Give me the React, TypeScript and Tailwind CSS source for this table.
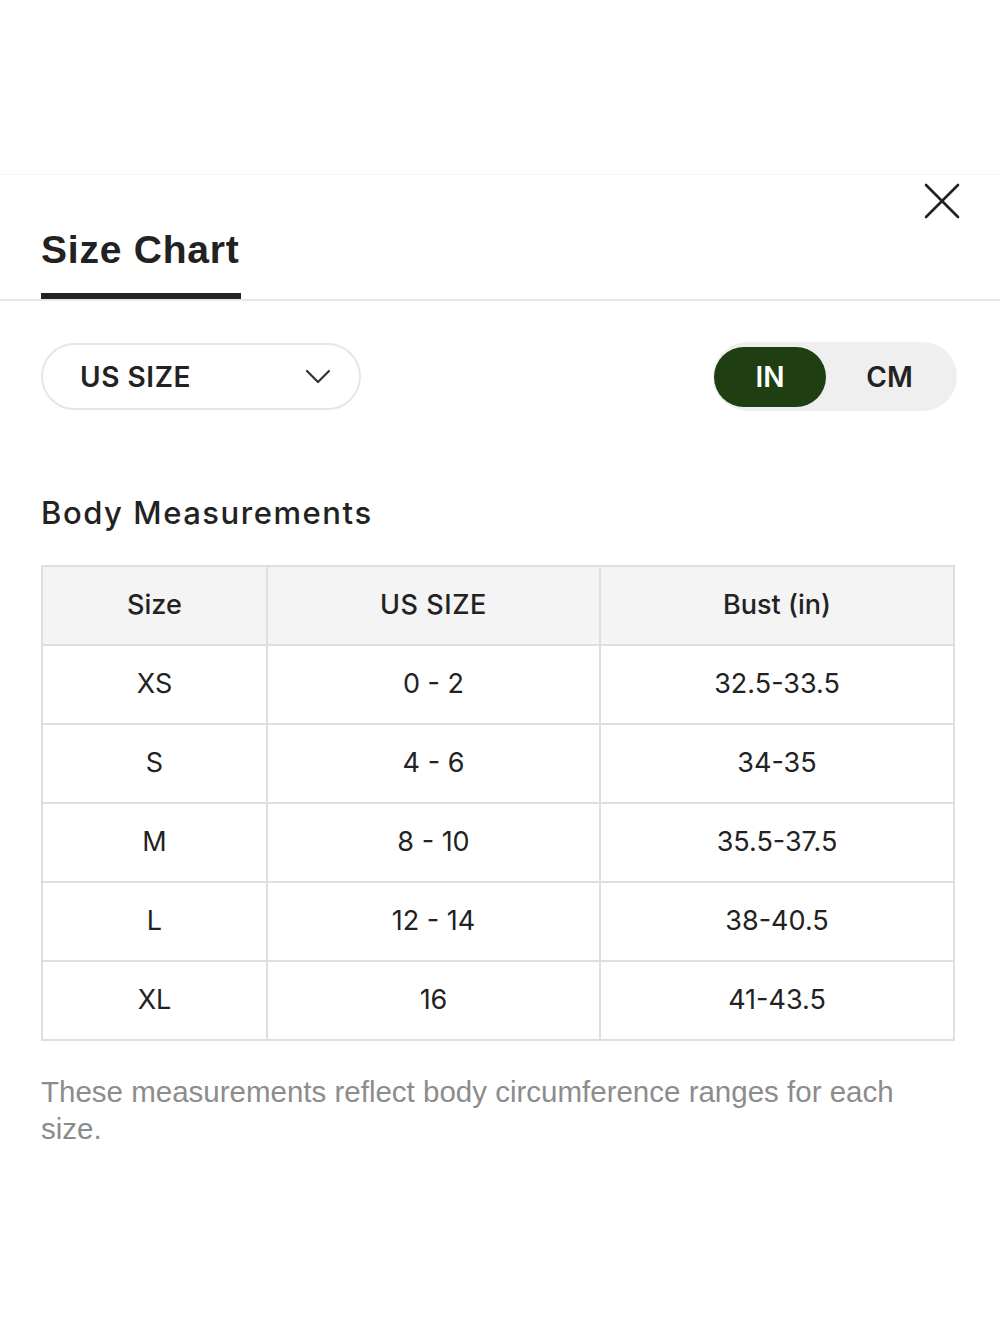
import { useState } from 'react'

const rows = [
  { size: 'XS', us: '0 - 2', bust: '32.5-33.5' },
  { size: 'S', us: '4 - 6', bust: '34-35' },
  { size: 'M', us: '8 - 10', bust: '35.5-37.5' },
  { size: 'L', us: '12 - 14', bust: '38-40.5' },
  { size: 'XL', us: '16', bust: '41-43.5' },
]

const sans = "font-['Inter',_'Noto_Sans',_sans-serif]"
const cell = 'h-[79px] flex items-center justify-center border-r-2 border-b-2 border-[#dfdfdf]'

export default function App() {
  const [unit, setUnit] = useState<'in' | 'cm'>('in')

  return (
    <div className="w-[1000px] h-[1333px] bg-white pt-[174px] text-[#222]">
      <div className="border-t border-[#f6f6f6]">
        {/* close */}
        <div className="flex justify-end pr-[40px] pt-[8px]">
          <button aria-label="Close" className="w-[36px] h-[36px]">
            <svg width="36" height="36" viewBox="0 0 36 36" fill="none" stroke="#222" strokeWidth="2.6" strokeLinecap="round">
              <line x1="2" y1="2" x2="34" y2="34" />
              <line x1="34" y1="2" x2="2" y2="34" />
            </svg>
          </button>
        </div>

        {/* tab */}
        <div className="px-[41px] mt-[11px]">
          <div className="inline-flex flex-col">
            <h1 className="font-['Liberation_Sans',_Arial,_sans-serif] font-bold text-[39px] leading-[39px] tracking-[0.02em] text-[#222]">
              Size Chart
            </h1>
            <div className="mt-[24px] h-[6px] w-[200px] bg-[#222]" />
          </div>
        </div>
        <div className="h-[2px] bg-[#e8e8e8]" />

        {/* controls */}
        <div className={`mt-[41px] px-[41px] flex items-center justify-between ${sans}`}>
          <button className="w-[320px] h-[67px] rounded-full border-2 border-[#e6e6e6] pl-[37px] pr-[28px] flex items-center justify-between">
            <span className="text-[28px] font-semibold tracking-[0.02em] text-[#222]">US SIZE</span>
            <svg width="26" height="15" viewBox="0 0 26 15" fill="none" stroke="#333" strokeWidth="2.2" strokeLinecap="round" strokeLinejoin="round">
              <polyline points="2,2 13,13 24,2" />
            </svg>
          </button>
          <div className="w-[244px] h-[69px] rounded-full bg-[#efefef] p-[4px] pl-[1px] flex items-center mr-[2px]">
            <button
              onClick={() => setUnit('in')}
              className={`w-[112px] h-[60px] rounded-full text-[28px] font-semibold ${unit === 'in' ? 'bg-[#1f3f12] text-white' : 'text-[#222]'}`}
            >
              IN
            </button>
            <button
              onClick={() => setUnit('cm')}
              className={`flex-1 h-[60px] rounded-full text-[28px] font-semibold ${unit === 'cm' ? 'bg-[#1f3f12] text-white' : 'text-[#222]'}`}
            >
              CM
            </button>
          </div>
        </div>

        {/* table */}
        <div className={`px-[41px] ${sans}`}>
          <h2 className="mt-[82px] text-[31px] leading-[40px] font-medium tracking-[0.05em] text-[#222]">
            Body Measurements
          </h2>
          <div className="mt-[32px] w-[914px] grid grid-cols-[225px_333px_354px] border-l-2 border-t-2 border-[#dfdfdf]">
            <div className={`${cell} bg-[#f4f4f4] text-[27px] font-medium`}>Size</div>
            <div className={`${cell} bg-[#f4f4f4] text-[27px] font-medium tracking-[0.02em]`}>US SIZE</div>
            <div className={`${cell} bg-[#f4f4f4] text-[27px] font-medium`}>Bust (in)</div>
            {rows.map((r) => (
              <div key={r.size} className="contents">
                <div className={`${cell} text-[27px]`}>{r.size}</div>
                <div className={`${cell} text-[27px]`}>{r.us}</div>
                <div className={`${cell} text-[27px]`}>{r.bust}</div>
              </div>
            ))}
          </div>
          <p className="mt-[32px] font-['Liberation_Sans',_Arial,_sans-serif] text-[29.5px] leading-[37px] text-[#8c8c8c]">
            These measurements reflect body circumference ranges for each size.
          </p>
        </div>
      </div>
    </div>
  )
}
